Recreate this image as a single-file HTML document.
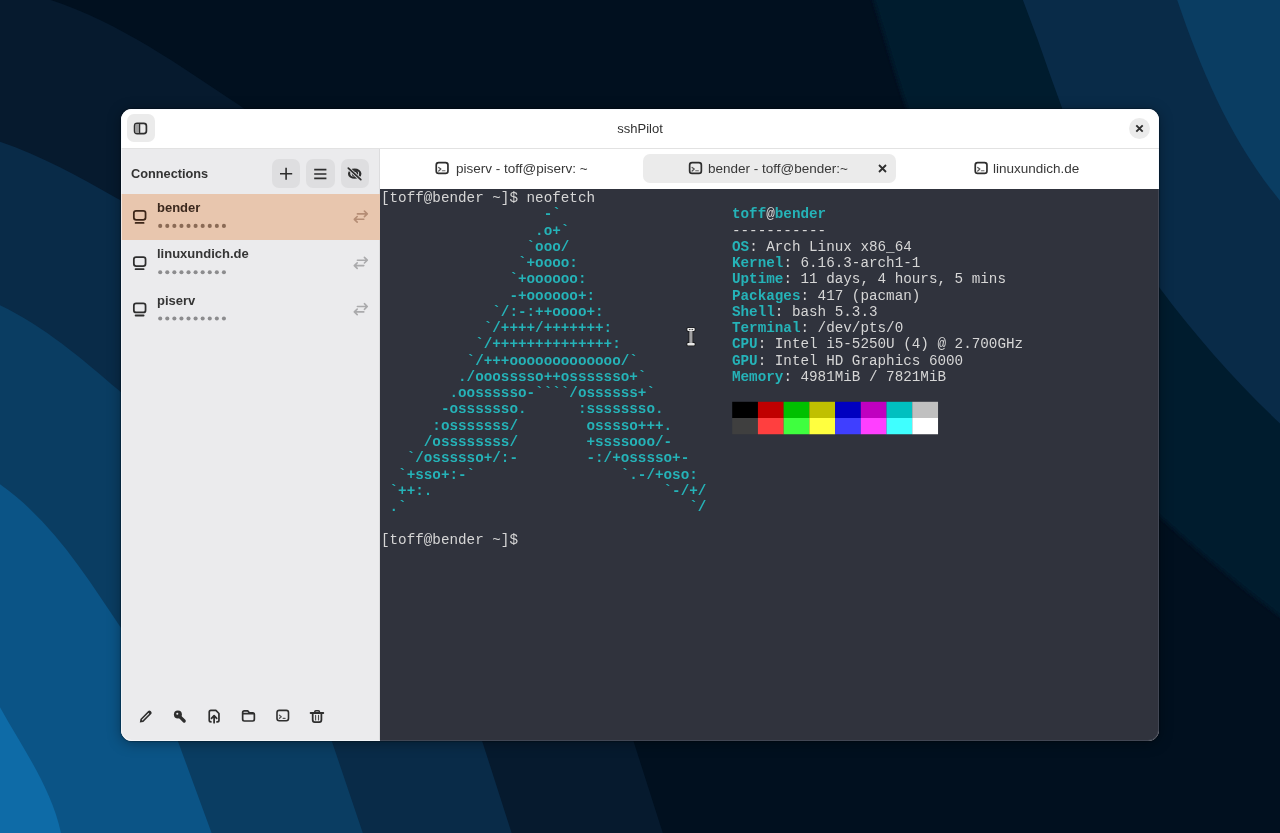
<!DOCTYPE html>
<html><head><meta charset="utf-8">
<style>
*{box-sizing:border-box;margin:0;padding:0}
html,body{width:1280px;height:833px;overflow:hidden;background:#01101f;font-family:"Liberation Sans",sans-serif}
#bg{position:absolute;left:0;top:0}
#win{position:absolute;left:121px;top:109px;width:1038px;height:632px;border-radius:11px;overflow:hidden;box-shadow:0 0 1px 1px rgba(0,0,0,.25),0 2px 14px rgba(0,0,0,.35);background:#fff}
#title{position:absolute;left:0;top:0;width:1038px;height:40px;background:#fff;border-bottom:1px solid #e2e2e2}
#title .t{position:absolute;left:0;width:100%;top:12px;text-align:center;font-size:13px;color:#303030;line-height:16px}
#tgl{position:absolute;left:6px;top:5px;width:28px;height:28px;border-radius:7px;background:#ebebeb}
#cls{position:absolute;left:1008px;top:9px;width:21px;height:21px;border-radius:50%;background:#ebebeb}
#side{position:absolute;left:0;top:40px;width:259px;height:592px;background:#ebebed;border-right:1px solid #dcdcde}
#side .hdr{position:absolute;left:10px;top:16.8px;font-size:12.75px;font-weight:bold;color:#333;line-height:16px}
.sbtn{position:absolute;top:10px;width:28.6px;height:29px;border-radius:7px;background:#dedee0}
.row{position:absolute;left:0;width:259px;height:46px}
.row.sel{background:#e8c6ae}
.row .nm{position:absolute;left:36px;top:6px;font-size:13px;font-weight:bold;color:#353535;line-height:16px}
.row.sel .nm{color:#3b281d}
#tabs{position:absolute;left:259px;top:40px;width:779px;height:40px;background:#fff}
.tab{position:absolute;top:5px;width:253px;height:29px;border-radius:7px}
.tab.act{background:#ebebeb}
.tab .tx{position:absolute;top:6px;font-size:13.5px;color:#383838;line-height:17px;white-space:nowrap}
#term{position:absolute;left:259px;top:80px;width:779px;height:552px;background:#30333d}
#term pre{position:absolute;left:1px;top:1.1px;font-family:"Liberation Mono",monospace;font-size:14.28px;line-height:16.27px;color:#d6d6d6}
.c{color:#25b3b8;font-weight:bold}
.t,.hdr,.nm,.tx,#term pre{will-change:transform}
</style></head><body>
<svg id="bg" width="1280" height="833" viewBox="0 0 1280 833">
<defs><filter id="sb" x="-5%" y="-5%" width="110%" height="110%"><feGaussianBlur stdDeviation="2.2"/></filter></defs>
<rect width="1280" height="833" fill="#01101f"/>
<path d="M50.8,0.0 C120.1,22.9 179.6,65.5 239.7,105.6 L250.0,113.0 L631.0,734.0 L633.6,741.4 L662.8,833.0 L0.0,833.0 L0.0,0.0 Z" fill="#061a2e"/>
<path d="M0.0,141.7 C41.2,155.7 79.6,176.8 117.2,198.4 L126.0,203.0 L480.0,735.0 L482.3,741.4 L511.6,833.0 L0.0,833.0 Z" fill="#092b48"/>
<path d="M0.0,305.2 C44.3,326.2 81.8,358.7 118.8,390.3 L126.0,397.0 L330.0,735.0 L331.9,741.4 L362.8,833.0 L0.0,833.0 Z" fill="#0a3d62"/>
<path d="M0.0,484.3 C51.3,520.5 86.1,575.5 120.4,627.1 L125.0,634.0 L176.0,735.0 L178.0,741.4 L211.6,833.0 L0.0,833.0 Z" fill="#0b5486"/>
<path d="M0.0,707.2 C22.4,747.9 51.0,786.8 61.0,833.0 L0.0,833.0 Z" fill="#0e6ba7"/>
<path d="M867.3,-20.0 L873.4,0.0 L885.2,39.0 L896.9,78.1 L906.6,107.4 L908.0,113.0 L1150.0,508.0 L1160.0,516.8 C1198.6,551.5 1238.3,585.0 1280.0,616.0 L1300.0,631.0 L1300.0,-20.0 Z" fill="#061a2e" filter="url(#sb)"/>
<path d="M1022.9,0.0 L1037.5,39.0 L1051.2,78.1 L1061.9,107.4 L1063.0,113.0 L1150.0,275.0 L1160.1,288.4 C1196.2,336.7 1236.2,382.0 1280.0,423.5 L1280.0,0.0 Z" fill="#092b48"/>
<path d="M1177.2,0.0 C1201.5,71.4 1231.5,142.0 1280.0,200.7 L1280.0,0.0 Z" fill="#0a3d62"/>
</svg>
<div id="win">
 <div id="title"><div class="t">sshPilot</div>
  <div id="tgl"></div>
  <div id="cls"></div>
 </div>
 <div id="side">
  <div class="hdr">Connections</div>
  <div class="sbtn" style="left:150.5px"></div>
  <div class="sbtn" style="left:185.1px"></div>
  <div class="sbtn" style="left:219.5px"></div>
  <div class="row sel" style="top:45px"><div class="nm">bender</div></div>
  <div class="row" style="top:91.3px"><div class="nm">linuxundich.de</div></div>
  <div class="row" style="top:137.6px"><div class="nm">piserv</div></div>
 </div>
 <div id="tabs">
  <div class="tab" style="left:6px"><div class="tx" style="left:69.5px">piserv - toff@piserv: ~</div></div>
  <div class="tab act" style="left:263px"><div class="tx" style="left:65px">bender - toff@bender:~</div></div>
  <div class="tab" style="left:520px"><div class="tx" style="left:93px">linuxundich.de</div></div>
 </div>
 <div id="edge" style="position:absolute;left:0;top:0;width:1038px;height:632px;border-radius:11px;border:1px solid rgba(200,225,255,.12);pointer-events:none;z-index:5"></div>
 <div style="position:absolute;left:0;top:30px;width:259px;height:602px;border-bottom-left-radius:11px;border-left:1px solid rgba(255,255,255,.55);border-bottom:1px solid rgba(255,255,255,.55);pointer-events:none;z-index:6"></div>
 <div id="term"><pre>[toff@bender ~]$ neofetch
<span class="c">                   -`                    </span><span class="c">toff</span>@<span class="c">bender</span>
<span class="c">                  .o+`                   </span>-----------
<span class="c">                 `ooo/                   </span><span class="c">OS</span>: Arch Linux x86_64
<span class="c">                `+oooo:                  </span><span class="c">Kernel</span>: 6.16.3-arch1-1
<span class="c">               `+oooooo:                 </span><span class="c">Uptime</span>: 11 days, 4 hours, 5 mins
<span class="c">               -+oooooo+:                </span><span class="c">Packages</span>: 417 (pacman)
<span class="c">             `/:-:++oooo+:               </span><span class="c">Shell</span>: bash 5.3.3
<span class="c">            `/++++/+++++++:              </span><span class="c">Terminal</span>: /dev/pts/0
<span class="c">           `/++++++++++++++:             </span><span class="c">CPU</span>: Intel i5-5250U (4) @ 2.700GHz
<span class="c">          `/+++ooooooooooooo/`           </span><span class="c">GPU</span>: Intel HD Graphics 6000
<span class="c">         ./ooosssso++osssssso+`          </span><span class="c">Memory</span>: 4981MiB / 7821MiB
<span class="c">        .oossssso-````/ossssss+`         </span>
<span class="c">       -osssssso.      :ssssssso.        </span>                        
<span class="c">      :osssssss/        osssso+++.       </span>                        
<span class="c">     /ossssssss/        +ssssooo/-       </span>
<span class="c">   `/ossssso+/:-        -:/+osssso+-     </span>
<span class="c">  `+sso+:-`                 `.-/+oso:    </span>
<span class="c"> `++:.                           `-/+/   </span>
<span class="c"> .`                                 `/   </span>

[toff@bender ~]$</pre></div>
</div>
<svg id="ov" width="1280" height="833" viewBox="0 0 1280 833" style="position:absolute;left:0;top:0;pointer-events:none">
<rect x="732.20" y="401.8" width="25.8" height="16.25" fill="#000000"/><rect x="732.20" y="418" width="25.8" height="16.25" fill="#3f3f3f"/>
<rect x="757.92" y="401.8" width="25.8" height="16.25" fill="#c00000"/><rect x="757.92" y="418" width="25.8" height="16.25" fill="#ff3f3f"/>
<rect x="783.64" y="401.8" width="25.8" height="16.25" fill="#00c000"/><rect x="783.64" y="418" width="25.8" height="16.25" fill="#3fff3f"/>
<rect x="809.36" y="401.8" width="25.8" height="16.25" fill="#c0c000"/><rect x="809.36" y="418" width="25.8" height="16.25" fill="#ffff3f"/>
<rect x="835.08" y="401.8" width="25.8" height="16.25" fill="#0000c0"/><rect x="835.08" y="418" width="25.8" height="16.25" fill="#3f3fff"/>
<rect x="860.80" y="401.8" width="25.8" height="16.25" fill="#c000c0"/><rect x="860.80" y="418" width="25.8" height="16.25" fill="#ff3fff"/>
<rect x="886.52" y="401.8" width="25.8" height="16.25" fill="#00c0c0"/><rect x="886.52" y="418" width="25.8" height="16.25" fill="#3fffff"/>
<rect x="912.24" y="401.8" width="25.8" height="16.25" fill="#c0c0c0"/><rect x="912.24" y="418" width="25.8" height="16.25" fill="#ffffff"/>
<rect x="134.6" y="123.3" width="11.8" height="10.4" rx="2.6" fill="none" stroke="#2e2e2e" stroke-width="1.7"/>
<rect x="135.4" y="124.1" width="4.2" height="8.8" fill="#a0a0a0"/>
<line x1="139.6" y1="123.5" x2="139.6" y2="133.5" stroke="#2e2e2e" stroke-width="1.3"/>
<path d="M1136.3,125.3 L1142.7,131.7 M1142.7,125.3 L1136.3,131.7" stroke="#2e2e2e" stroke-width="1.9" stroke-linecap="butt"/>
<path d="M286.1,167.8 V179.8 M280,173.8 H292.2" stroke="#2e2e2e" stroke-width="1.6"/>
<path d="M314.2,169.7 H326.4 M314.2,174 H326.4 M314.2,178.3 H326.4" stroke="#2e2e2e" stroke-width="1.7"/>
<ellipse cx="354.7" cy="173.7" rx="5.6" ry="4.0" fill="none" stroke="#2e2e2e" stroke-width="2.3"/>
<circle cx="355.0" cy="173.5" r="2.4" fill="none" stroke="#2e2e2e" stroke-width="1.6"/>
<path d="M348.6,168.4 L360.6,179.4" stroke="#dcdcde" stroke-width="3.4"/>
<path d="M348.3,168.1 L360.8,179.6" stroke="#2e2e2e" stroke-width="1.7" stroke-linecap="round"/>
<g transform="translate(0,0)">
<rect x="133.85" y="210.75" width="11.7" height="9.1" rx="2.3" fill="none" stroke="#3d2618" stroke-width="1.75"/>
<line x1="135.6" y1="222.9" x2="143.6" y2="222.9" stroke="#3d2618" stroke-width="1.8" stroke-linecap="round"/>
<path d="M357.4,213.9 H367 M364.4,211.1 L367.3,213.9 L364.4,216.7 M363.8,219.3 H354.4 M357.2,216.5 L354.3,219.3 L357.2,222.1" fill="none" stroke="#b58d75" stroke-width="1.6" stroke-linecap="round" stroke-linejoin="round"/>
<circle cx="160.20" cy="225.9" r="2.05" fill="#8a6a55"/>
<circle cx="167.28" cy="225.9" r="2.05" fill="#8a6a55"/>
<circle cx="174.36" cy="225.9" r="2.05" fill="#8a6a55"/>
<circle cx="181.44" cy="225.9" r="2.05" fill="#8a6a55"/>
<circle cx="188.52" cy="225.9" r="2.05" fill="#8a6a55"/>
<circle cx="195.60" cy="225.9" r="2.05" fill="#8a6a55"/>
<circle cx="202.68" cy="225.9" r="2.05" fill="#8a6a55"/>
<circle cx="209.76" cy="225.9" r="2.05" fill="#8a6a55"/>
<circle cx="216.84" cy="225.9" r="2.05" fill="#8a6a55"/>
<circle cx="223.92" cy="225.9" r="2.05" fill="#8a6a55"/>
</g>
<g transform="translate(0,46.3)">
<rect x="133.85" y="210.75" width="11.7" height="9.1" rx="2.3" fill="none" stroke="#2e2e2e" stroke-width="1.75"/>
<line x1="135.6" y1="222.9" x2="143.6" y2="222.9" stroke="#2e2e2e" stroke-width="1.8" stroke-linecap="round"/>
<path d="M357.4,213.9 H367 M364.4,211.1 L367.3,213.9 L364.4,216.7 M363.8,219.3 H354.4 M357.2,216.5 L354.3,219.3 L357.2,222.1" fill="none" stroke="#aaaaac" stroke-width="1.6" stroke-linecap="round" stroke-linejoin="round"/>
<circle cx="160.20" cy="225.9" r="2.05" fill="#8c8c8e"/>
<circle cx="167.28" cy="225.9" r="2.05" fill="#8c8c8e"/>
<circle cx="174.36" cy="225.9" r="2.05" fill="#8c8c8e"/>
<circle cx="181.44" cy="225.9" r="2.05" fill="#8c8c8e"/>
<circle cx="188.52" cy="225.9" r="2.05" fill="#8c8c8e"/>
<circle cx="195.60" cy="225.9" r="2.05" fill="#8c8c8e"/>
<circle cx="202.68" cy="225.9" r="2.05" fill="#8c8c8e"/>
<circle cx="209.76" cy="225.9" r="2.05" fill="#8c8c8e"/>
<circle cx="216.84" cy="225.9" r="2.05" fill="#8c8c8e"/>
<circle cx="223.92" cy="225.9" r="2.05" fill="#8c8c8e"/>
</g>
<g transform="translate(0,92.6)">
<rect x="133.85" y="210.75" width="11.7" height="9.1" rx="2.3" fill="none" stroke="#2e2e2e" stroke-width="1.75"/>
<line x1="135.6" y1="222.9" x2="143.6" y2="222.9" stroke="#2e2e2e" stroke-width="1.8" stroke-linecap="round"/>
<path d="M357.4,213.9 H367 M364.4,211.1 L367.3,213.9 L364.4,216.7 M363.8,219.3 H354.4 M357.2,216.5 L354.3,219.3 L357.2,222.1" fill="none" stroke="#aaaaac" stroke-width="1.6" stroke-linecap="round" stroke-linejoin="round"/>
<circle cx="160.20" cy="225.9" r="2.05" fill="#8c8c8e"/>
<circle cx="167.28" cy="225.9" r="2.05" fill="#8c8c8e"/>
<circle cx="174.36" cy="225.9" r="2.05" fill="#8c8c8e"/>
<circle cx="181.44" cy="225.9" r="2.05" fill="#8c8c8e"/>
<circle cx="188.52" cy="225.9" r="2.05" fill="#8c8c8e"/>
<circle cx="195.60" cy="225.9" r="2.05" fill="#8c8c8e"/>
<circle cx="202.68" cy="225.9" r="2.05" fill="#8c8c8e"/>
<circle cx="209.76" cy="225.9" r="2.05" fill="#8c8c8e"/>
<circle cx="216.84" cy="225.9" r="2.05" fill="#8c8c8e"/>
<circle cx="223.92" cy="225.9" r="2.05" fill="#8c8c8e"/>
</g>
<rect x="436.25" y="162.65" width="11.7" height="10.8" rx="2.4" fill="none" stroke="#2e2e2e" stroke-width="1.7"/>
<path d="M438.7,167.4 L440.9,169.0 L438.7,171.0" fill="none" stroke="#555" stroke-width="1.2" stroke-linecap="round" stroke-linejoin="round"/>
<line x1="442.29999999999995" y1="170.8" x2="445.0" y2="170.8" stroke="#666" stroke-width="1.1" stroke-linecap="round"/>
<rect x="689.65" y="162.65" width="11.7" height="10.8" rx="2.4" fill="none" stroke="#2e2e2e" stroke-width="1.7"/>
<path d="M692.0999999999999,167.4 L694.3,169.0 L692.0999999999999,171.0" fill="none" stroke="#555" stroke-width="1.2" stroke-linecap="round" stroke-linejoin="round"/>
<line x1="695.6999999999999" y1="170.8" x2="698.4" y2="170.8" stroke="#666" stroke-width="1.1" stroke-linecap="round"/>
<rect x="975.25" y="162.65" width="11.7" height="10.8" rx="2.4" fill="none" stroke="#2e2e2e" stroke-width="1.7"/>
<path d="M977.6999999999999,167.4 L979.9,169.0 L977.6999999999999,171.0" fill="none" stroke="#555" stroke-width="1.2" stroke-linecap="round" stroke-linejoin="round"/>
<line x1="981.3" y1="170.8" x2="984.0" y2="170.8" stroke="#666" stroke-width="1.1" stroke-linecap="round"/>
<path d="M879,165 L886,172 M886,165 L879,172" stroke="#2e2e2e" stroke-width="1.8"/>
<path d="M148.2,710.9 Q149.4,709.9 150.6,711.1 L151.2,711.7 Q152.3,712.9 151.2,714 L143.3,721.9 L139.8,722.6 L140.4,719.1 Z" fill="#2e2e2e"/>
<line x1="142.4" y1="719.9" x2="148.6" y2="713.7" stroke="#ebebed" stroke-width="1.1" stroke-linecap="round"/>
<circle cx="177.9" cy="714.6" r="4.0" fill="#2e2e2e"/>
<line x1="179" y1="715.8" x2="184.2" y2="721.0" stroke="#2e2e2e" stroke-width="3.2" stroke-linecap="round"/>
<circle cx="177.3" cy="713.8" r="1.05" fill="#ebebed"/>
<path d="M211.6,721.95 H210.9 Q209.25,721.95 209.25,720.3 V712.1 Q209.25,710.45 210.9,710.45 H215.9 L218.95,713.5 V720.3 Q218.95,721.95 217.3,721.95 H216.3" fill="none" stroke="#2e2e2e" stroke-width="1.7" stroke-linejoin="round"/>
<path d="M214.1,722.7 V716.3 M211.5,718.4 L214.1,715.7 L216.7,718.4" fill="none" stroke="#2e2e2e" stroke-width="1.75" stroke-linejoin="round" stroke-linecap="round"/>
<path d="M242.65,713.3 V712.6 Q242.65,710.95 244.3,710.95 H247.7 L249.4,712.75 H252.7 Q254.35,712.75 254.35,714.4 V719.35 Q254.35,721 252.7,721 H244.3 Q242.65,721 242.65,719.35 Z M242.65,713.7 H254.35" fill="none" stroke="#2e2e2e" stroke-width="1.7" stroke-linejoin="round"/>
<rect x="277" y="710.4" width="11.5" height="10.4" rx="2.2" fill="none" stroke="#2e2e2e" stroke-width="1.6"/>
<path d="M279.4,715.2 L281.3,716.7 L279.4,718.3" fill="none" stroke="#555" stroke-width="1.2" stroke-linecap="round" stroke-linejoin="round"/>
<line x1="283.1" y1="718.4" x2="285.1" y2="718.4" stroke="#555" stroke-width="1.1" stroke-linecap="round"/>
<path d="M310.6,713 H323.3" stroke="#2e2e2e" stroke-width="1.8" stroke-linecap="round"/>
<path d="M314.7,713 V712 Q314.7,710.8 315.9,710.8 H318.3 Q319.5,710.8 319.5,712 V713" fill="none" stroke="#2e2e2e" stroke-width="1.5"/>
<path d="M312.7,713.4 V720.1 Q312.7,722.1 314.7,722.1 H319.4 Q321.4,722.1 321.4,720.1 V713.4" fill="none" stroke="#2e2e2e" stroke-width="1.75"/>
<path d="M315.6,715.4 V720 M318.5,715.4 V720" stroke="#4a4a4a" stroke-width="1.1" stroke-linecap="round"/>
<rect x="686.6" y="327.4" width="8.8" height="4.2" rx="1.2" fill="#151515"/>
<rect x="686.6" y="342.2" width="8.8" height="4.0" rx="1.2" fill="#151515"/>
<rect x="688.6" y="330.8" width="4.6" height="12" fill="#151515"/>
<rect x="687.3" y="328.1" width="7.4" height="2.8" rx="0.8" fill="#f2f2f2"/>
<rect x="688.9" y="328.9" width="1.6" height="1.2" fill="#444"/><rect x="691.5" y="328.9" width="1.6" height="1.2" fill="#444"/>
<rect x="687.3" y="342.9" width="7.4" height="2.6" rx="0.8" fill="#e8e8e8"/>
<rect x="689.3" y="331" width="3.2" height="12" fill="#a0a0a2"/>
</svg>
</body></html>
